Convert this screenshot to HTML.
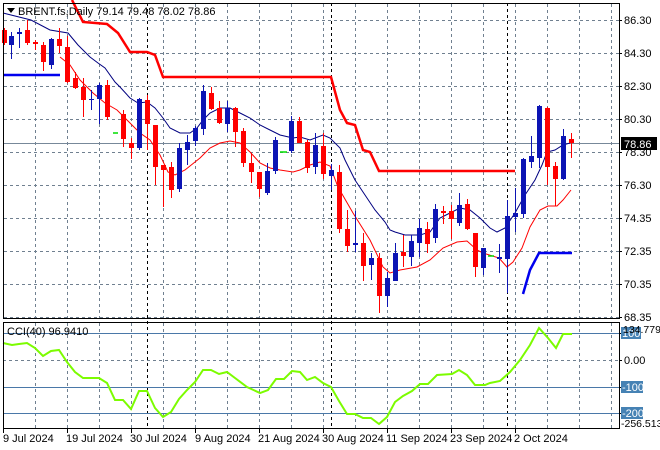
<!DOCTYPE html>
<html><head><meta charset="utf-8"><style>
html,body{margin:0;padding:0;background:#fff;width:660px;height:450px;overflow:hidden}
svg{display:block}
text{font-family:"Liberation Sans",sans-serif;font-size:11px;fill:#000}
</style></head><body>
<svg id="s" width="660" height="450" xmlns="http://www.w3.org/2000/svg">
<rect width="660" height="450" fill="#fff"/>
<g id="grid" stroke="#708090" stroke-width="1" stroke-dasharray="3,3" fill="none"></g>
<g stroke="#000" stroke-width="1" stroke-dasharray="3,3">
<line x1="147.5" y1="3" x2="147.5" y2="429"/>
<line x1="331.5" y1="3" x2="331.5" y2="429"/>
<line x1="507.5" y1="3" x2="507.5" y2="429"/>
</g>
<line x1="3" y1="143.5" x2="619" y2="143.5" stroke="#778899"/>
<g stroke="#4a78a8" stroke-width="1">
<line x1="3" y1="333.5" x2="619" y2="333.5"/>
<line x1="3" y1="387.5" x2="619" y2="387.5"/>
<line x1="3" y1="413.5" x2="619" y2="413.5"/>
</g>
<line x1="3" y1="360.5" x2="619" y2="360.5" stroke="#708090" stroke-dasharray="3,3"/>
<polyline fill="none" stroke="#ff0000" stroke-width="2.5" points="72,0 83,22 107,24 118,33 130,52 147,52 155,55 163,77 331,77 340,110 347,123 355,125 363,150 370,152 379,171 515,171"/>
<polyline fill="none" stroke="#0000ee" stroke-width="2.5" points="3,75 60,75"/>
<polyline fill="none" stroke="#0000ee" stroke-width="2.5" points="523,294 530,270 539,253 572,253"/>
<polyline fill="none" stroke="#000080" stroke-width="1" points="3,13 31,20 50,30 68,33 78,45 90,57 98,63 105,68 115,82 120,87 130,98 138,103 147,102 155,108 163,118 170,128 180,133 190,133 197,128 203,120 210,113 220,108 230,108 240,113 250,118 260,125 270,130 280,135 293,138 300,137 310,140 323,135 330,138 340,148 345,160 355,180 365,195 375,210 385,222 390,230 395,232 405,235 420,235 430,232 440,218 450,213 460,208 470,210 480,218 490,228 497,232 505,228 515,213 525,195 535,180 542,165 547,152 555,150 563,145 570,143"/>
<polyline fill="none" stroke="#ff0000" stroke-width="1" points="60,57 70,65 80,80 93,93 105,103 117,110 127,120 140,133 150,140 160,155 168,172 175,175 185,170 200,158 210,148 220,143 230,141 240,143 250,152 260,163 270,168 280,170 293,172 300,170 310,165 320,162 330,166 338,187 353,213 370,240 383,267 390,273 400,270 417,267 430,260 443,248 457,242 467,241 477,250 483,253 499,258 507,267 513,262 522,248 530,227 540,210 548,206 557,206 563,200 571,190"/>
<g id="candles"></g>
<g stroke="#00dd00" stroke-width="1.5">
<line x1="113" y1="133" x2="118" y2="133"/><line x1="280" y1="152" x2="287" y2="152"/><line x1="488" y1="256" x2="494" y2="256"/>
</g>
<polyline fill="none" stroke="#7cfc00" stroke-width="2" points="3,343 12,345 19,344 27,343 35,348 43,356 51,351 59,350 67,362 75,372 83,378 99,378 107,383 115,400 123,400 131,409 139,391 147,391 155,408 163,417 171,412 179,399 187,390 195,382 203,370 211,370 219,374 227,372 235,378 247,387 260,393 268,390 276,379 284,379 292,371 300,372 307,380 315,377 323,383 331,387 339,401 347,414 355,414 363,418 371,418 379,424 387,417 395,402 403,396 412,391 420,384 428,384 437,375 452,374 459,370 467,375 475,385 485,385 490,383 500,381 510,372 520,360 530,345 539,328 548,338 556,348 563,334 572,334"/>
<rect x="3.5" y="3.5" width="616" height="315" fill="none" stroke="#000"/>
<rect x="3.5" y="322.5" width="616" height="106" fill="none" stroke="#000"/>
<g id="ticks" stroke="#000"></g>
<path d="M7 8 L15 8 L11 13 Z" fill="#000"/>
<text x="18" y="15">BRENT.fs,Daily  79.14 79.48 78.02 78.86</text>
<text x="7" y="335">CCI(40) 96.9410</text>
<g>
<text x="624" y="24">86.30</text>
<text x="624" y="57">84.30</text>
<text x="624" y="90">82.30</text>
<text x="624" y="123">80.30</text>
<text x="624" y="156">78.30</text>
<text x="624" y="189">76.30</text>
<text x="624" y="222">74.35</text>
<text x="624" y="255">72.35</text>
<text x="624" y="288">70.35</text>
<text x="624" y="321">68.35</text>
</g>
<rect x="621" y="137" width="36" height="13" fill="#000"/>
<text x="624" y="148" style="fill:#fff">78.86</text>
<rect x="621" y="327" width="20" height="12" fill="#4682b4"/>
<text x="622" y="337" style="fill:#fff">100</text>
<text x="623" y="333" style="font-size:10.5px">134.779</text>
<text x="624" y="364">0.00</text>
<rect x="621" y="381" width="22" height="12" fill="#4682b4"/>
<text x="622" y="391" style="fill:#fff">-100</text>
<rect x="621" y="407" width="22" height="12" fill="#4682b4"/>
<text x="622" y="417" style="fill:#fff">-200</text>
<text x="621" y="427" style="font-size:10.5px">-256.513</text>
<g>
<text x="3" y="442">9 Jul 2024</text>
<text x="66" y="442">19 Jul 2024</text>
<text x="130" y="442">30 Jul 2024</text>
<text x="195" y="442">9 Aug 2024</text>
<text x="258" y="442">21 Aug 2024</text>
<text x="322" y="442">30 Aug 2024</text>
<text x="386" y="442">11 Sep 2024</text>
<text x="450" y="442">23 Sep 2024</text>
<text x="514" y="442">2 Oct 2024</text>
</g>
</svg>
<script>
var NS="http://www.w3.org/2000/svg";
function el(p,t,a){var e=document.createElementNS(NS,t);for(var k in a)e.setAttribute(k,a[k]);p.appendChild(e);return e;}
var g=document.getElementById('grid');
var xs=[35,67,99,131,163,195,227,259,291,323,355,387,419,451,483,515,547,579,611];
xs.forEach(function(x){el(g,'line',{x1:x+.5,y1:4,x2:x+.5,y2:318});el(g,'line',{x1:x+.5,y1:323,x2:x+.5,y2:428});});
[20,53,86,119,152,185,218,251,284,317].forEach(function(y){el(g,'line',{x1:4,y1:y+.5,x2:619,y2:y+.5});});
var t=document.getElementById('ticks');
[3,67,131,195,259,323,387,451,515].forEach(function(x){el(t,'line',{x1:x+.5,y1:429,x2:x+.5,y2:433});});
[20,53,86,119,152,185,218,251,284,317,333,360,387,413].forEach(function(y){el(t,'line',{x1:619,y1:y+.5,x2:622,y2:y+.5});});
var C=[[4,28,45,30,43,'r'],[11,32,59,36,45,'b'],[19,28,48,32,34,'b'],[27,20,45,30,43,'r'],[35,40,50,42,44,'r'],[43,42,71,45,62,'r'],[51,38,69,39,65,'b'],[59,28,53,39,46,'r'],[67,36,83,47,82,'r'],[75,72,89,78,88,'r'],[83,78,117,87,100,'r'],[91,90,110,99,100,'b'],[99,83,124,85,99,'b'],[107,80,120,85,117,'r'],[123,110,147,114,139,'r'],[131,138,159,143,148,'r'],[139,98,150,99,148,'b'],[147,95,150,100,124,'r'],[155,125,185,125,167,'r'],[163,165,207,165,170,'r'],[171,162,198,167,190,'r'],[179,143,192,148,189,'b'],[187,135,165,142,150,'b'],[195,126,146,128,141,'b'],[203,85,135,91,129,'b'],[211,87,110,93,109,'r'],[219,101,124,108,123,'r'],[227,101,132,108,124,'b'],[235,107,147,108,132,'r'],[243,128,167,131,163,'r'],[251,153,183,163,172,'r'],[259,172,197,172,189,'r'],[267,163,195,171,193,'b'],[275,137,174,140,171,'b'],[291,116,153,121,151,'b'],[299,117,143,121,143,'r'],[307,140,173,142,168,'r'],[315,133,174,145,167,'b'],[323,133,179,146,174,'r'],[331,164,190,170,176,'b'],[339,165,233,172,229,'r'],[347,210,252,229,246,'r'],[355,211,252,243,245,'b'],[363,233,281,243,266,'r'],[371,253,280,258,265,'b'],[379,253,313,258,296,'r'],[387,272,307,278,296,'b'],[395,243,281,253,281,'b'],[403,235,267,252,256,'r'],[411,235,266,241,257,'b'],[419,219,257,228,243,'b'],[427,222,253,229,244,'r'],[435,204,243,209,238,'b'],[443,206,224,211,213,'r'],[451,205,239,211,219,'r'],[459,193,226,205,223,'b'],[467,199,230,204,229,'r'],[475,233,277,233,267,'r'],[483,248,275,248,268,'b'],[499,244,273,257,259,'b'],[507,200,293,216,259,'b'],[515,188,232,213,217,'b'],[523,158,218,159,214,'b'],[531,136,168,156,162,'b'],[539,105,168,106,158,'b'],[547,107,185,108,167,'r'],[555,162,206,166,179,'r'],[563,129,180,136,179,'b'],[571,133,158,139,143,'r']];
var cg=document.getElementById('candles');
C.forEach(function(c){var col=c[5]=='r'?'#ff0000':'#0c14b4';
el(cg,'line',{x1:c[0]+.5,y1:c[1],x2:c[0]+.5,y2:c[2],stroke:col,'stroke-width':1});
el(cg,'rect',{x:c[0]-2,y:c[3],width:5,height:Math.max(1,c[4]-c[3]),fill:col});});
</script>
</body></html>
